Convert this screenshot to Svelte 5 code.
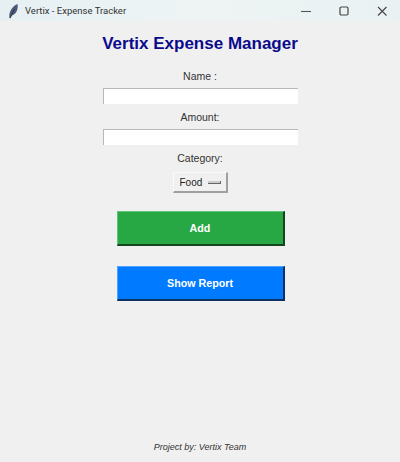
<script>
  let name = $state("");
  let amount = $state("");
  const category = "Food";
</script>

<div class="window">
  <header class="titlebar">
    <svg class="feather" width="12" height="16" viewBox="0 0 12 16">
      <path d="M2.5 15 C1.5 10 4.5 3.5 10.5 1 C11.5 5.5 9.5 11 5 12.5 L3.2 15.5 Z" fill="#4a5a78" />
      <path d="M3 15 L7.5 6" stroke="#26304a" stroke-width="0.8" fill="none" />
    </svg>
    <span class="title">Vertix - Expense Tracker</span>
    <div class="controls">
      <svg width="10" height="10" viewBox="0 0 10 10">
        <path d="M0 5.5 H10" stroke="#555" stroke-width="1.1" />
      </svg>
      <svg width="10" height="10" viewBox="0 0 10 10">
        <rect x="1" y="1" width="8" height="8" rx="1.2" fill="none" stroke="#444" stroke-width="1.2" />
      </svg>
      <svg width="10" height="10" viewBox="0 0 10 10">
        <path d="M1 1 L9.5 9.5 M9.5 1 L1 9.5" stroke="#444" stroke-width="1.1" />
      </svg>
    </div>
  </header>

  <main class="form">
    <h1>Vertix Expense Manager</h1>

    <label for="name">Name :</label>
    <input id="name" type="text" bind:value={name} />

    <label for="amount">Amount:</label>
    <input id="amount" type="text" bind:value={amount} />

    <span class="label">Category:</span>
    <button class="option">
      <span>{category}</span>
      <i class="indicator"></i>
    </button>

    <button class="action add">Add</button>
    <button class="action report">Show Report</button>
  </main>

  <footer>Project by: Vertix Team</footer>
</div>

<style>
  :global(body) {
    margin: 0;
    background: #f0f0f0;
  }

  .window {
    width: 400px;
    height: 462px;
    display: flex;
    flex-direction: column;
    background: #f0f0f0;
    font-family: "Liberation Sans", Arial, sans-serif;
    color: #222;
    overflow: hidden;
  }

  .titlebar {
    height: 21px;
    flex: none;
    display: flex;
    align-items: center;
    padding-left: 7px;
    background: linear-gradient(90deg, #e6f0f3, #eef4f4 50%, #e9f1f2);
  }

  .feather {
    margin-right: 6px;
  }

  .title {
    font-family: Roboto, "Noto Sans", sans-serif;
    font-size: 9.5px;
    color: #333;
  }

  .controls {
    margin-left: auto;
    display: flex;
    gap: 28px;
    padding-right: 13px;
  }

  .form {
    flex: 1;
    display: flex;
    flex-direction: column;
    align-items: center;
  }

  h1 {
    margin: 12px 0 14px;
    font-size: 17px;
    line-height: 22px;
    font-weight: 700;
    color: #0a0a8c;
  }

  label,
  .label {
    font-size: 10.5px;
    line-height: 14px;
    color: #333;
  }

  input {
    box-sizing: border-box;
    width: 195px;
    height: 16px;
    margin: 5px 0 6px;
    padding: 0 2px;
    border: none;
    border-top: 1px solid #b8b8b8;
    border-left: 1px solid #b8b8b8;
    background: #fff;
    outline: none;
  }

  .option {
    box-sizing: border-box;
    width: 55px;
    height: 21px;
    margin-top: 7px;
    padding: 0 5px 0 6px;
    display: flex;
    align-items: center;
    justify-content: space-between;
    font-family: inherit;
    font-size: 10px;
    color: #222;
    background: #f0f0f0;
    border: 1px solid;
    border-right-width: 2px;
    border-bottom-width: 2px;
    border-color: #fafafa #a0a0a0 #a0a0a0 #fafafa;
  }

  .indicator {
    width: 12px;
    height: 2px;
    border-bottom: 1px solid #666;
    border-right: 1px solid #666;
    background: #ccc;
  }

  .action {
    box-sizing: border-box;
    width: 168px;
    height: 35px;
    padding: 0;
    margin-left: 1px;
    font-family: inherit;
    font-size: 10.7px;
    font-weight: 700;
    color: #fff;
    border: 1px solid;
    border-right-width: 2px;
    border-bottom-width: 2px;
  }

  .add {
    margin-top: 18px;
    background: #28a745;
    border-color: #5fc57a #14451f #14451f #5fc57a;
  }

  .report {
    margin-top: 20px;
    background: #007bff;
    border-color: #4da3ff #0c3263 #0c3263 #4da3ff;
  }

  footer {
    flex: none;
    padding-bottom: 9px;
    text-align: center;
    font-size: 9px;
    line-height: 12px;
    font-style: italic;
    color: #333;
  }
</style>
